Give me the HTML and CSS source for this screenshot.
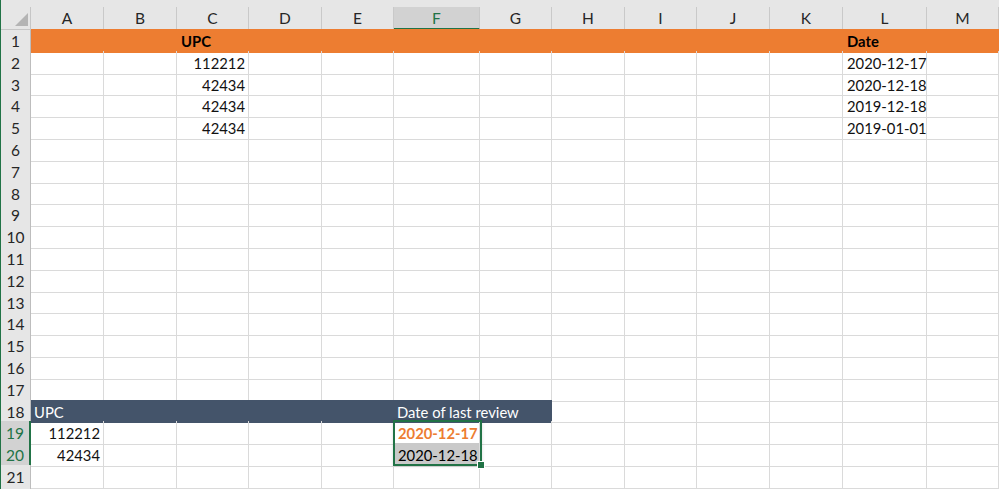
FILE: index.html
```html
<!DOCTYPE html>
<html>
<head>
<meta charset="utf-8">
<link rel="stylesheet" href="styles.css">
</head>
<body>
<div class="sheet">
  <div class="row hdr">
    <div class="corner"><span class="tri"></span></div>
    <div class="ch">A</div><div class="ch">B</div><div class="ch">C</div><div class="ch">D</div><div class="ch">E</div><div class="ch sel">F</div><div class="ch">G</div><div class="ch">H</div><div class="ch">I</div><div class="ch">J</div><div class="ch">K</div><div class="ch">L</div><div class="ch">M</div>
  </div>

  <div class="row">
    <div class="rh">1</div>
    <div class="c or"></div><div class="c or"></div><div class="c or b">UPC</div><div class="c or"></div><div class="c or"></div><div class="c or"></div><div class="c or"></div><div class="c or"></div><div class="c or"></div><div class="c or"></div><div class="c or"></div><div class="c or b">Date</div><div class="c or"></div>
  </div>
  <div class="row">
    <div class="rh">2</div>
    <div class="c"></div><div class="c"></div><div class="c r">112212</div><div class="c"></div><div class="c"></div><div class="c"></div><div class="c"></div><div class="c"></div><div class="c"></div><div class="c"></div><div class="c"></div><div class="c r">2020-12-17</div><div class="c"></div>
  </div>
  <div class="row">
    <div class="rh">3</div>
    <div class="c"></div><div class="c"></div><div class="c r">42434</div><div class="c"></div><div class="c"></div><div class="c"></div><div class="c"></div><div class="c"></div><div class="c"></div><div class="c"></div><div class="c"></div><div class="c r">2020-12-18</div><div class="c"></div>
  </div>
  <div class="row">
    <div class="rh">4</div>
    <div class="c"></div><div class="c"></div><div class="c r">42434</div><div class="c"></div><div class="c"></div><div class="c"></div><div class="c"></div><div class="c"></div><div class="c"></div><div class="c"></div><div class="c"></div><div class="c r">2019-12-18</div><div class="c"></div>
  </div>
  <div class="row">
    <div class="rh">5</div>
    <div class="c"></div><div class="c"></div><div class="c r">42434</div><div class="c"></div><div class="c"></div><div class="c"></div><div class="c"></div><div class="c"></div><div class="c"></div><div class="c"></div><div class="c"></div><div class="c r">2019-01-01</div><div class="c"></div>
  </div>
  <div class="row">
    <div class="rh">6</div>
    <div class="c"></div><div class="c"></div><div class="c"></div><div class="c"></div><div class="c"></div><div class="c"></div><div class="c"></div><div class="c"></div><div class="c"></div><div class="c"></div><div class="c"></div><div class="c"></div><div class="c"></div>
  </div>
  <div class="row">
    <div class="rh">7</div>
    <div class="c"></div><div class="c"></div><div class="c"></div><div class="c"></div><div class="c"></div><div class="c"></div><div class="c"></div><div class="c"></div><div class="c"></div><div class="c"></div><div class="c"></div><div class="c"></div><div class="c"></div>
  </div>
  <div class="row">
    <div class="rh">8</div>
    <div class="c"></div><div class="c"></div><div class="c"></div><div class="c"></div><div class="c"></div><div class="c"></div><div class="c"></div><div class="c"></div><div class="c"></div><div class="c"></div><div class="c"></div><div class="c"></div><div class="c"></div>
  </div>
  <div class="row">
    <div class="rh">9</div>
    <div class="c"></div><div class="c"></div><div class="c"></div><div class="c"></div><div class="c"></div><div class="c"></div><div class="c"></div><div class="c"></div><div class="c"></div><div class="c"></div><div class="c"></div><div class="c"></div><div class="c"></div>
  </div>
  <div class="row">
    <div class="rh">10</div>
    <div class="c"></div><div class="c"></div><div class="c"></div><div class="c"></div><div class="c"></div><div class="c"></div><div class="c"></div><div class="c"></div><div class="c"></div><div class="c"></div><div class="c"></div><div class="c"></div><div class="c"></div>
  </div>
  <div class="row">
    <div class="rh">11</div>
    <div class="c"></div><div class="c"></div><div class="c"></div><div class="c"></div><div class="c"></div><div class="c"></div><div class="c"></div><div class="c"></div><div class="c"></div><div class="c"></div><div class="c"></div><div class="c"></div><div class="c"></div>
  </div>
  <div class="row">
    <div class="rh">12</div>
    <div class="c"></div><div class="c"></div><div class="c"></div><div class="c"></div><div class="c"></div><div class="c"></div><div class="c"></div><div class="c"></div><div class="c"></div><div class="c"></div><div class="c"></div><div class="c"></div><div class="c"></div>
  </div>
  <div class="row">
    <div class="rh">13</div>
    <div class="c"></div><div class="c"></div><div class="c"></div><div class="c"></div><div class="c"></div><div class="c"></div><div class="c"></div><div class="c"></div><div class="c"></div><div class="c"></div><div class="c"></div><div class="c"></div><div class="c"></div>
  </div>
  <div class="row">
    <div class="rh">14</div>
    <div class="c"></div><div class="c"></div><div class="c"></div><div class="c"></div><div class="c"></div><div class="c"></div><div class="c"></div><div class="c"></div><div class="c"></div><div class="c"></div><div class="c"></div><div class="c"></div><div class="c"></div>
  </div>
  <div class="row">
    <div class="rh">15</div>
    <div class="c"></div><div class="c"></div><div class="c"></div><div class="c"></div><div class="c"></div><div class="c"></div><div class="c"></div><div class="c"></div><div class="c"></div><div class="c"></div><div class="c"></div><div class="c"></div><div class="c"></div>
  </div>
  <div class="row">
    <div class="rh">16</div>
    <div class="c"></div><div class="c"></div><div class="c"></div><div class="c"></div><div class="c"></div><div class="c"></div><div class="c"></div><div class="c"></div><div class="c"></div><div class="c"></div><div class="c"></div><div class="c"></div><div class="c"></div>
  </div>
  <div class="row">
    <div class="rh">17</div>
    <div class="c"></div><div class="c"></div><div class="c"></div><div class="c"></div><div class="c"></div><div class="c"></div><div class="c"></div><div class="c"></div><div class="c"></div><div class="c"></div><div class="c"></div><div class="c"></div><div class="c"></div>
  </div>
  <div class="row">
    <div class="rh">18</div>
    <div class="c dk">UPC</div><div class="c dk"></div><div class="c dk"></div><div class="c dk"></div><div class="c dk"></div><div class="c dk span2">Date of last review</div><div class="c"></div><div class="c"></div><div class="c"></div><div class="c"></div><div class="c"></div><div class="c"></div>
  </div>
  <div class="row">
    <div class="rh on">19</div>
    <div class="c r">112212</div><div class="c"></div><div class="c"></div><div class="c"></div><div class="c"></div><div class="c r active">2020-12-17</div><div class="c"></div><div class="c"></div><div class="c"></div><div class="c"></div><div class="c"></div><div class="c"></div><div class="c"></div>
  </div>
  <div class="row">
    <div class="rh on">20</div>
    <div class="c r">42434</div><div class="c"></div><div class="c"></div><div class="c"></div><div class="c"></div><div class="c r picked">2020-12-18</div><div class="c"></div><div class="c"></div><div class="c"></div><div class="c"></div><div class="c"></div><div class="c"></div><div class="c"></div>
  </div>
  <div class="row">
    <div class="rh">21</div>
    <div class="c"></div><div class="c"></div><div class="c"></div><div class="c"></div><div class="c"></div><div class="c"></div><div class="c"></div><div class="c"></div><div class="c"></div><div class="c"></div><div class="c"></div><div class="c"></div><div class="c"></div>
  </div>
  <div class="row">
    <div class="rh"></div>
    <div class="c"></div><div class="c"></div><div class="c"></div><div class="c"></div><div class="c"></div><div class="c"></div><div class="c"></div><div class="c"></div><div class="c"></div><div class="c"></div><div class="c"></div><div class="c"></div><div class="c"></div>
  </div>

  <div class="selection"><span class="handle"></span></div>
</div>
</body>
</html>
```

FILE: styles.css
```css
html, body {
  margin: 0;
  padding: 0;
  background: #ffffff;
}

body {
  width: 999px;
  height: 489px;
  overflow: hidden;
  font-family: "Lato", "Liberation Sans", sans-serif;
  font-size: 14.8px;
  color: #111;
}

.sheet {
  position: relative;
  border-left: 1px solid #217346;
  padding-top: 7px;
  background: #e6e6e6;
  height: 489px;
  box-sizing: border-box;
  overflow: hidden;
}

.row {
  display: grid;
  grid-template-columns: 30px 73px 73px 72px 73px 72px 86px 72px 73px 72px 73px 73px 84px 72px;
  height: 21.8px;
  background: #fff;
}

.hdr {
  height: 22px;
  background: #e6e6e6;
}

.corner {
  position: relative;
  border-right: 1px solid #c6c6c6;
  border-bottom: 1px solid #c6c6c6;
}

.tri {
  position: absolute;
  right: 2px;
  bottom: 3px;
  width: 0;
  height: 0;
  border-left: 13px solid transparent;
  border-bottom: 13px solid #b4b4b4;
}

.ch {
  border-right: 1px solid #c9c9c9;
  border-bottom: 1px solid #c0c0c0;
  text-align: center;
  line-height: 21px;
  padding-top: 1px;
  box-sizing: border-box;
  color: #262626;
  font-size: 15.5px;
}

.ch.sel {
  background: #d2d2d2;
  color: #217346;
  border-bottom: 2px solid #217346;
  line-height: 20px;
}

.rh {
  background: #e6e6e6;
  border-right: 1px solid #bdbdbd;
  border-bottom: 1px solid #cfcfcf;
  text-align: center;
  line-height: 20.8px;
  padding-top: 2px;
  box-sizing: border-box;
  color: #262626;
  font-size: 15.5px;
}

.rh.on {
  background: #d2d2d2;
  color: #217346;
  border-right: 2px solid #217346;
}

.c {
  border-right: 1px solid #dadada;
  border-bottom: 1px solid #dadada;
  padding: 2px 3px 0 4px;
  box-sizing: border-box;
  line-height: 20.8px;
  white-space: nowrap;
  overflow: visible;
  min-width: 0;
}

.r {
  text-align: right;
}

.b {
  font-weight: bold;
  color: #000;
}

.or {
  background: #ed7d31;
  border-color: #ed7d31;
}

.dk {
  background: #44546a;
  border-color: #44546a;
  color: #ffffff;
  padding-left: 3px;
}

.span2 {
  grid-column: span 2;
}

.active {
  color: #ed7d31;
  font-weight: bold;
  border-bottom: 1px solid #a9a9a9;
}

.picked {
  background: #c9c9c9;
  color: #000;
}

.selection {
  position: absolute;
  left: 392px;
  top: 420px;
  width: 89px;
  height: 46px;
  box-sizing: border-box;
  border: 2px solid #217346;
  box-shadow: 0 0 3px rgba(0, 0, 0, 0.15);
}

.handle {
  position: absolute;
  right: -5px;
  bottom: -5px;
  width: 6px;
  height: 6px;
  background: #217346;
  border: 1px solid #ffffff;
}
```
